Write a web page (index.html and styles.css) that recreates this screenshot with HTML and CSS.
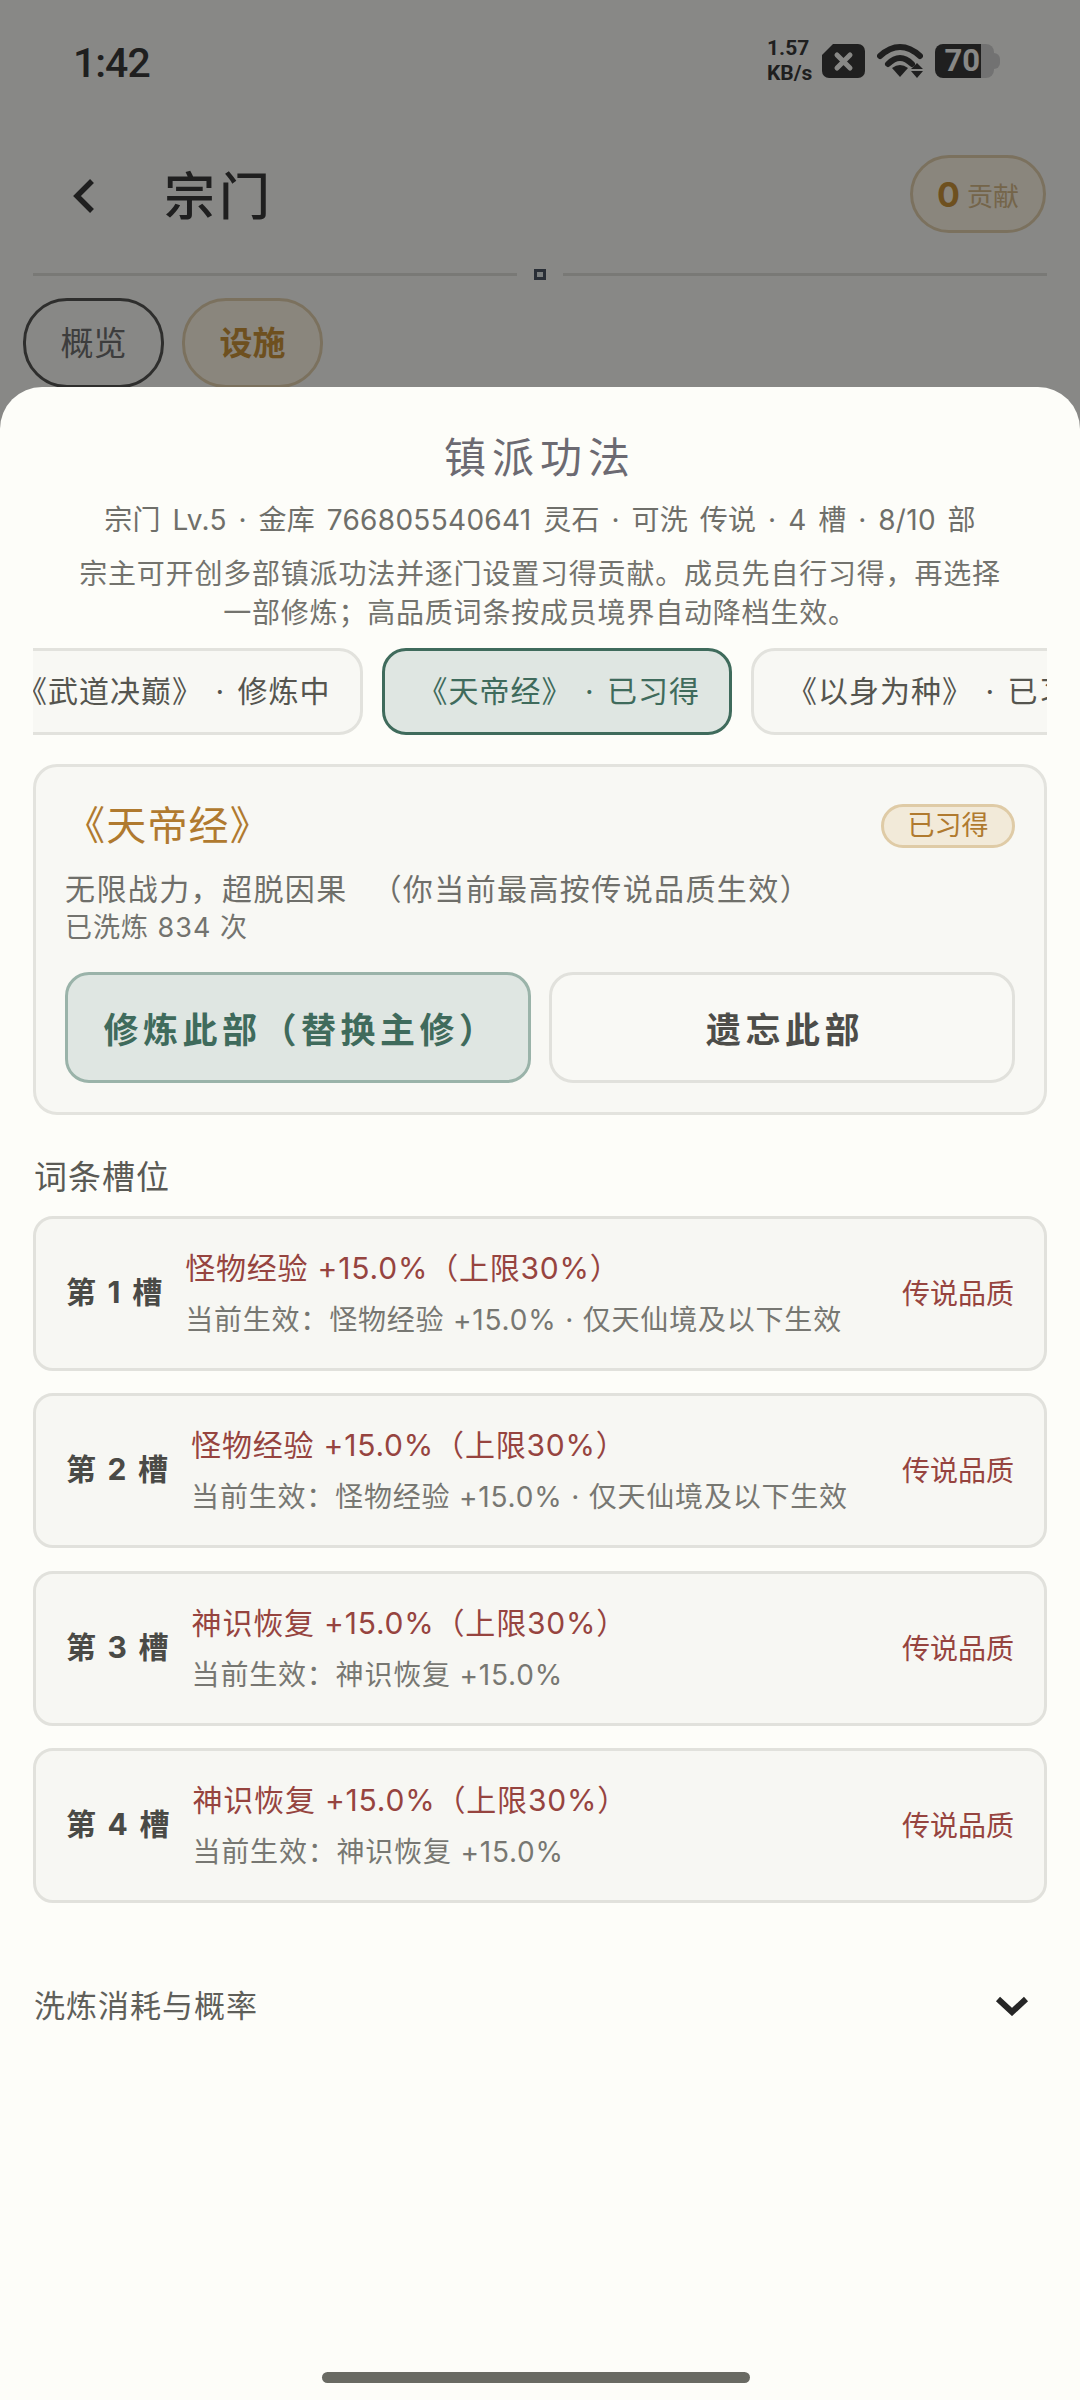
FILE: index.html
```html
<!DOCTYPE html>
<html lang="zh-CN">
<head>
    <meta charset="UTF-8">
    <meta name="viewport" content="width=device-width, initial-scale=1.0">
    <title>宗门 - 镇派功法</title>
    <link rel="stylesheet" href="styles.css">
</head>
<body>
    <div class="page">
        <div class="status-bar">
            <span class="time">1:42</span>
            <div class="status-icons">
                <div class="speed"><span>1.57</span><span>KB/s</span></div>
                <svg class="sim" width="43" height="34" viewBox="0 0 43 34">
                    <path d="M11 0H36a7 7 0 0 1 7 7V27a7 7 0 0 1-7 7H7a7 7 0 0 1-7-7V11Z" fill="#3a3a3a"/>
                    <path d="M15 11L28 24M28 11L15 24" stroke="#f8f8f4" stroke-width="5" stroke-linecap="round"/>
                </svg>
                <svg class="wifi" width="46" height="34" viewBox="0 0 46 34">
                    <path d="M3 12C16 0 30 0 43 12" fill="none" stroke="#3a3a3a" stroke-width="6" stroke-linecap="round"/>
                    <path d="M11 20C19 12 27 12 35 20" fill="none" stroke="#3a3a3a" stroke-width="6" stroke-linecap="round"/>
                    <path d="M15 24Q23 18 31 24L23 33Z" fill="#3a3a3a"/>
                    <path d="M40 19L46 25H34ZM34 27H46L40 34Z" fill="#3a3a3a"/>
                </svg>
                <div class="battery">
                    <div class="battery-level">70</div>
                    <div class="battery-rest"></div>
                    <div class="battery-tip"></div>
                </div>
            </div>
        </div>

        <div class="header">
            <svg class="back" width="24" height="36" viewBox="0 0 24 36">
                <path d="M20 3L5 18L20 33" fill="none" stroke="#3a3a3a" stroke-width="5.5"/>
            </svg>
            <h1 class="page-title">宗门</h1>
            <div class="contrib"><b>0</b><span>贡献</span></div>
        </div>

        <div class="divider">
            <div class="divider-line"></div>
            <div class="divider-dot"></div>
            <div class="divider-line"></div>
        </div>

        <div class="page-tabs">
            <div class="page-tab">概览</div>
            <div class="page-tab active">设施</div>
        </div>
    </div>

    <div class="scrim"></div>

    <div class="sheet">
        <h2 class="sheet-title">镇派功法</h2>
        <p class="sheet-info">宗门 Lv.5 · 金库 766805540641 灵石 · 可洗 传说 · 4 槽 · 8/10 部</p>
        <p class="sheet-desc">宗主可开创多部镇派功法并逐门设置习得贡献。成员先自行习得，再选择<br>一部修炼；高品质词条按成员境界自动降档生效。</p>

        <div class="art-tabs">
            <div class="art-strip">
                <div class="art-tab">《武道决巅》 · 修炼中</div>
                <div class="art-tab selected">《天帝经》 · 已习得</div>
                <div class="art-tab">《以身为种》 · 已习得</div>
            </div>
        </div>

        <div class="art-card">
            <div class="art-head">
                <span class="art-name">《天帝经》</span>
                <span class="art-badge">已习得</span>
            </div>
            <p class="art-effect">无限战力，超脱因果 （你当前最高按传说品质生效）</p>
            <p class="art-count">已洗炼 834 次</p>
            <div class="art-actions">
                <button type="button" class="btn btn-main">修炼此部（替换主修）</button>
                <button type="button" class="btn">遗忘此部</button>
            </div>
        </div>

        <h3 class="section-title">词条槽位</h3>

        <div class="slots">
            <div class="slot">
                <span class="slot-no">第 1 槽</span>
                <div class="slot-body">
                    <div class="slot-main">怪物经验 +15.0%（上限30%）</div>
                    <div class="slot-sub">当前生效：怪物经验 +15.0% · 仅天仙境及以下生效</div>
                </div>
                <span class="slot-grade">传说品质</span>
            </div>
            <div class="slot">
                <span class="slot-no">第 2 槽</span>
                <div class="slot-body">
                    <div class="slot-main">怪物经验 +15.0%（上限30%）</div>
                    <div class="slot-sub">当前生效：怪物经验 +15.0% · 仅天仙境及以下生效</div>
                </div>
                <span class="slot-grade">传说品质</span>
            </div>
            <div class="slot">
                <span class="slot-no">第 3 槽</span>
                <div class="slot-body">
                    <div class="slot-main">神识恢复 +15.0%（上限30%）</div>
                    <div class="slot-sub">当前生效：神识恢复 +15.0%</div>
                </div>
                <span class="slot-grade">传说品质</span>
            </div>
            <div class="slot">
                <span class="slot-no">第 4 槽</span>
                <div class="slot-body">
                    <div class="slot-main">神识恢复 +15.0%（上限30%）</div>
                    <div class="slot-sub">当前生效：神识恢复 +15.0%</div>
                </div>
                <span class="slot-grade">传说品质</span>
            </div>
        </div>

        <div class="collapse">
            <span>洗炼消耗与概率</span>
            <svg width="34" height="20" viewBox="0 0 34 20">
                <path d="M3 3L17 16L31 3" fill="none" stroke="#262626" stroke-width="6"/>
            </svg>
        </div>

        <div class="home-bar"></div>
    </div>
</body>
</html>
```

FILE: styles.css
```css
* {
    box-sizing: border-box;
}
html, body {
    margin: 0;
    height: 2400px;
    overflow: hidden;
}
body {
    position: relative;
    width: 1080px;
    font-family: Inter, "Noto Sans CJK SC", sans-serif;
    background-color: #f8f8f4;
    color: #3a3a38;
}
h1, h2, h3, p {
    margin: 0;
    font-weight: 400;
}
.page {
    height: 387px;
    overflow: hidden;
}

/* status bar */
.status-bar {
    display: flex;
    align-items: center;
    justify-content: space-between;
    height: 122px;
    padding: 3px 80px 0 73px;
}
.time {
    font-family: Roboto, sans-serif;
    font-size: 41px;
    font-weight: 500;
    letter-spacing: -1px;
    color: #3a3a3a;
}
.status-icons {
    display: flex;
    align-items: center;
    margin-top: -3px;
}
.speed {
    display: flex;
    flex-direction: column;
    width: 55px;
    font-family: Roboto, sans-serif;
    font-size: 21px;
    line-height: 25px;
    font-weight: 700;
    color: #3a3a3a;
}
.wifi {
    margin-left: 12px;
}
.battery {
    display: flex;
    align-items: center;
    margin-left: 12px;
}
.battery-level {
    width: 46px;
    height: 34px;
    background-color: #3a3a3a;
    border-radius: 8px 0 0 8px;
    color: #f8f8f4;
    font-family: Roboto, sans-serif;
    font-size: 31px;
    font-weight: 700;
    line-height: 34px;
    text-align: right;
    padding-right: 1px;
}
.battery-rest {
    width: 13px;
    height: 34px;
    background-color: #d0d0d0;
    border-radius: 0 8px 8px 0;
}
.battery-tip {
    width: 6px;
    height: 16px;
    background-color: #d0d0d0;
    border-radius: 0 6px 6px 0;
}

/* header */
.header {
    display: flex;
    align-items: center;
    height: 147px;
    padding: 0 34px 0 72px;
}
.back {
    flex: none;
}
.page-title {
    flex: 1;
    margin: 0 0 5px 68px;
    font-size: 51px;
    font-weight: 500;
    letter-spacing: 4px;
    color: #3a3a3a;
}
.contrib {
    display: flex;
    align-items: center;
    justify-content: center;
    gap: 7px;
    width: 136px;
    height: 78px;
    margin-bottom: 3px;
    border: 3px solid #e0ceac;
    border-radius: 39px;
    background-color: #fcf4e4;
    color: #d4b888;
    font-size: 26px;
}
.contrib b {
    font-size: 34px;
    color: #c8923a;
}
.divider {
    display: flex;
    align-items: center;
    height: 10px;
    padding: 0 33px;
}
.divider-line {
    flex: 1;
    height: 3px;
    background-color: #dcdcd8;
}
.divider-dot {
    width: 12px;
    height: 11px;
    margin: 0 17px 0 17px;
    border: 3px solid #4b5563;
    background-color: #dfe3e3;
}
.page-tabs {
    display: flex;
    gap: 18px;
    padding: 19px 0 0 23px;
}
.page-tab {
    width: 141px;
    height: 90px;
    border: 3px solid #555553;
    border-radius: 44px;
    font-size: 33px;
    line-height: 84px;
    text-align: center;
    color: #707070;
}
.page-tab.active {
    border-color: #e0ceac;
    background-color: #fcf4e4;
    color: #c8923a;
    font-weight: 700;
}
.scrim {
    position: absolute;
    inset: 0;
    background-color: rgba(0, 0, 0, 0.45);
}

/* bottom sheet */
.sheet {
    position: absolute;
    top: 387px;
    left: 0;
    right: 0;
    bottom: 0;
    padding: 49px 33px 0;
    background-color: #fdfdf9;
    border-radius: 42px 42px 0 0;
}
.sheet-title {
    font-size: 42px;
    line-height: 44px;
    letter-spacing: 6px;
    text-align: center;
    color: #6c6a72;
}
.sheet-info {
    margin-top: 20px;
    font-size: 28px;
    line-height: 40px;
    letter-spacing: 0.3px;
    word-spacing: 3.5px;
    text-align: center;
    color: #6f6f6a;
}
.sheet-desc {
    margin-top: 15px;
    font-size: 28px;
    line-height: 39px;
    letter-spacing: 0.8px;
    text-align: center;
    color: #73736e;
}

/* technique picker */
.art-tabs {
    margin-top: 15px;
    overflow: hidden;
}
.art-strip {
    display: flex;
    gap: 19px;
    margin-left: -52px;
}
.art-tab {
    flex: none;
    height: 87px;
    padding: 0 29px 0 33px;
    border: 3px solid #e2e2dd;
    border-radius: 24px;
    background-color: #f8f8f4;
    font-size: 30px;
    line-height: 80px;
    letter-spacing: 1px;
    word-spacing: 3px;
    color: #55554f;
}
.art-tab.selected {
    border-color: #3f6b5c;
    background-color: #dfe6e2;
    color: #3f6b5c;
}
.art-card {
    height: 351px;
    margin-top: 29px;
    padding: 34px 29px 0;
    border: 3px solid #e3e3de;
    border-radius: 24px;
    background-color: #f8f8f4;
}
.art-head {
    display: flex;
    align-items: center;
    justify-content: space-between;
    height: 50px;
}
.art-name {
    margin-bottom: 6px;
    font-size: 40px;
    letter-spacing: 1.2px;
    color: #b07a2f;
}
.art-badge {
    width: 134px;
    height: 44px;
    border: 3px solid #dfcba6;
    border-radius: 22px;
    background-color: #f2ead9;
    font-size: 27px;
    line-height: 37px;
    text-align: center;
    color: #b07a2f;
}
.art-effect {
    margin-top: 18px;
    font-size: 30px;
    line-height: 40px;
    letter-spacing: 1.4px;
    word-spacing: 14px;
    color: #6f6f6a;
}
.art-count {
    font-size: 27px;
    line-height: 38px;
    letter-spacing: 1px;
    color: #73736e;
}
.art-actions {
    display: flex;
    gap: 18px;
    margin-top: 25px;
}
.btn {
    flex: 1;
    height: 111px;
    padding: 0 0 0 6px;
    border: 3px solid #e1e1dc;
    border-radius: 24px;
    background-color: #f9f9f5;
    font-family: inherit;
    font-size: 35px;
    font-weight: 700;
    letter-spacing: 4.5px;
    color: #4d4d49;
}
.btn-main {
    border-color: #9ab3a9;
    background-color: #dfe6e2;
    color: #3f6b5c;
}

/* slots */
.section-title {
    margin-top: 40px;
    padding-left: 1px;
    font-size: 33px;
    line-height: 44px;
    letter-spacing: 1px;
    color: #5a5a55;
}
.slots {
    display: flex;
    flex-direction: column;
    gap: 22.4px;
    margin-top: 17px;
}
.slot {
    display: flex;
    align-items: center;
    height: 155px;
    padding: 0 30px;
    border: 3px solid #e1e1dc;
    border-radius: 20px;
    background-color: #f7f7f3;
}
.slot-no {
    margin-bottom: 7px;
    font-size: 30px;
    font-weight: 700;
    word-spacing: 4.5px;
    color: #4a4a46;
}
.slot-body {
    flex: 1;
    margin-left: 23px;
}
.slot-main {
    font-size: 30px;
    line-height: 40px;
    letter-spacing: 0.8px;
    color: #96443f;
}
.slot-sub {
    margin-top: 13px;
    font-size: 28px;
    line-height: 38px;
    letter-spacing: 0.8px;
    color: #777772;
}
.slot-grade {
    margin-bottom: 3px;
    font-size: 28px;
    color: #96443f;
}
.collapse {
    display: flex;
    align-items: center;
    justify-content: space-between;
    margin-top: 81px;
    padding: 0 18px 0 1px;
    font-size: 31px;
    line-height: 44px;
    letter-spacing: 1px;
    color: #5f5f5a;
}
.home-bar {
    position: absolute;
    left: 322px;
    bottom: 17px;
    width: 428px;
    height: 11px;
    border-radius: 6px;
    background-color: #696a63;
}
```
